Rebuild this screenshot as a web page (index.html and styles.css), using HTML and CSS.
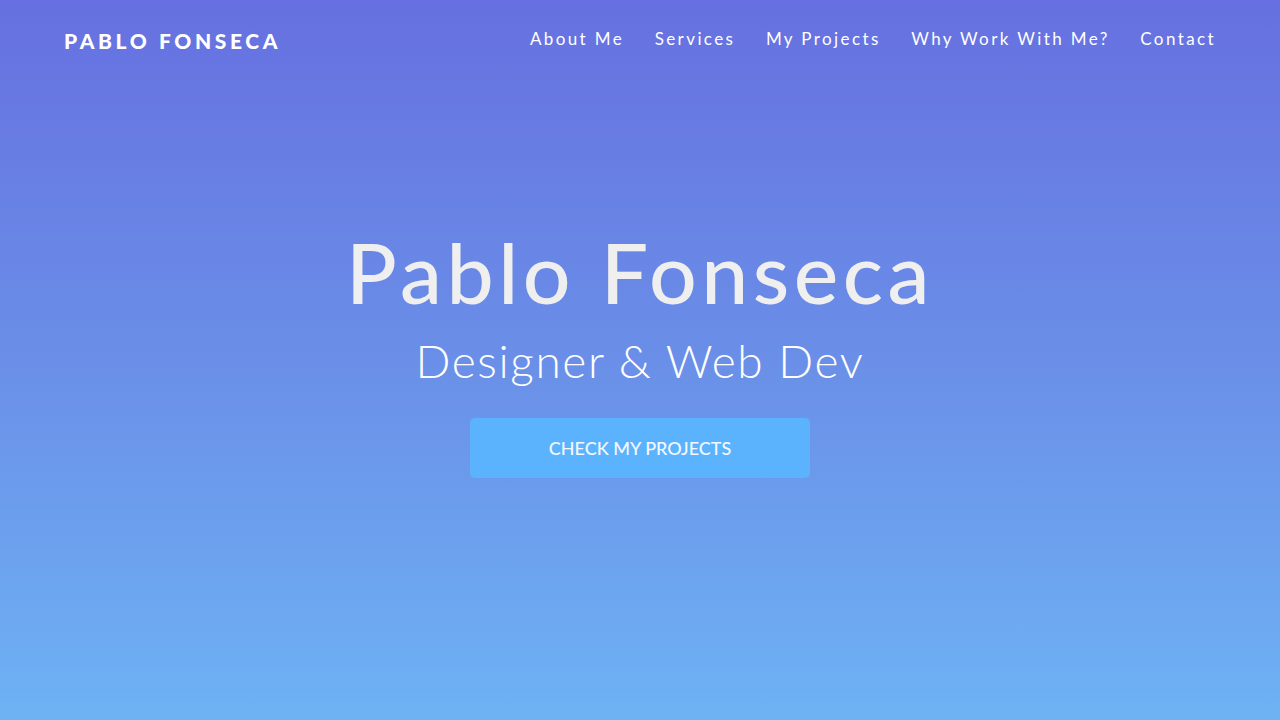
FILE: index.html
```html
<!DOCTYPE html>
<html lang="en">
<head>
<meta charset="utf-8">
<title>Pablo Fonseca</title>
<link rel="stylesheet" href="styles.css">
</head>
<body>
<div class="page">
  <header class="header">
    <a class="logo" href="#">PABLO FONSECA</a>
    <nav class="nav">
      <a href="#">About Me</a>
      <a href="#">Services</a>
      <a href="#">My Projects</a>
      <a href="#">Why Work With Me?</a>
      <a href="#">Contact</a>
    </nav>
  </header>
  <main class="hero">
    <h1 class="title">Pablo Fonseca</h1>
    <h2 class="subtitle">Designer &amp; Web Dev</h2>
    <a class="btn" href="#">CHECK MY PROJECTS</a>
  </main>
</div>
</body>
</html>
```
FILE: styles.css
```css
* { box-sizing: border-box; }
html, body { margin: 0; padding: 0; }
body {
  font-family: "Lato", "Noto Sans", sans-serif;
  color: #fff;
}
.page {
  height: 720px;
  background: linear-gradient(to bottom, #6670e0 0%, #6a8fe8 50%, #6eb2f4 100%);
  display: flex;
  flex-direction: column;
}
.header {
  display: flex;
  justify-content: space-between;
  align-items: flex-start;
  padding: 26px 64px 0 64px;
  height: 80px;
}
.logo {
  color: #fff;
  text-decoration: none;
  font-weight: 900;
  font-size: 21px;
  letter-spacing: 3.6px;
  line-height: 30px;
}
.nav {
  display: flex;
  gap: 30.5px;
}
.nav a {
  color: #fff;
  text-decoration: none;
  font-weight: 400;
  font-size: 17px;
  letter-spacing: 2.4px;
  line-height: 26px;
}
.hero {
  display: flex;
  flex-direction: column;
  align-items: center;
  padding-top: 142px;
}
.title {
  margin: 0;
  font-weight: 500;
  font-size: 84px;
  letter-spacing: 4.5px;
  line-height: 100px;
  color: #efefef;
}
.subtitle {
  margin: 9px 0 0 0;
  font-weight: 300;
  font-size: 46px;
  letter-spacing: 1.6px;
  line-height: 60px;
  color: #fff;
}
.btn {
  margin-top: 27px;
  width: 340px;
  height: 60px;
  background: #5cb3fd;
  border-radius: 5px;
  color: #f4f8ff;
  text-decoration: none;
  display: flex;
  align-items: center;
  justify-content: center;
  font-size: 18px;
  font-weight: 500;
}
```
